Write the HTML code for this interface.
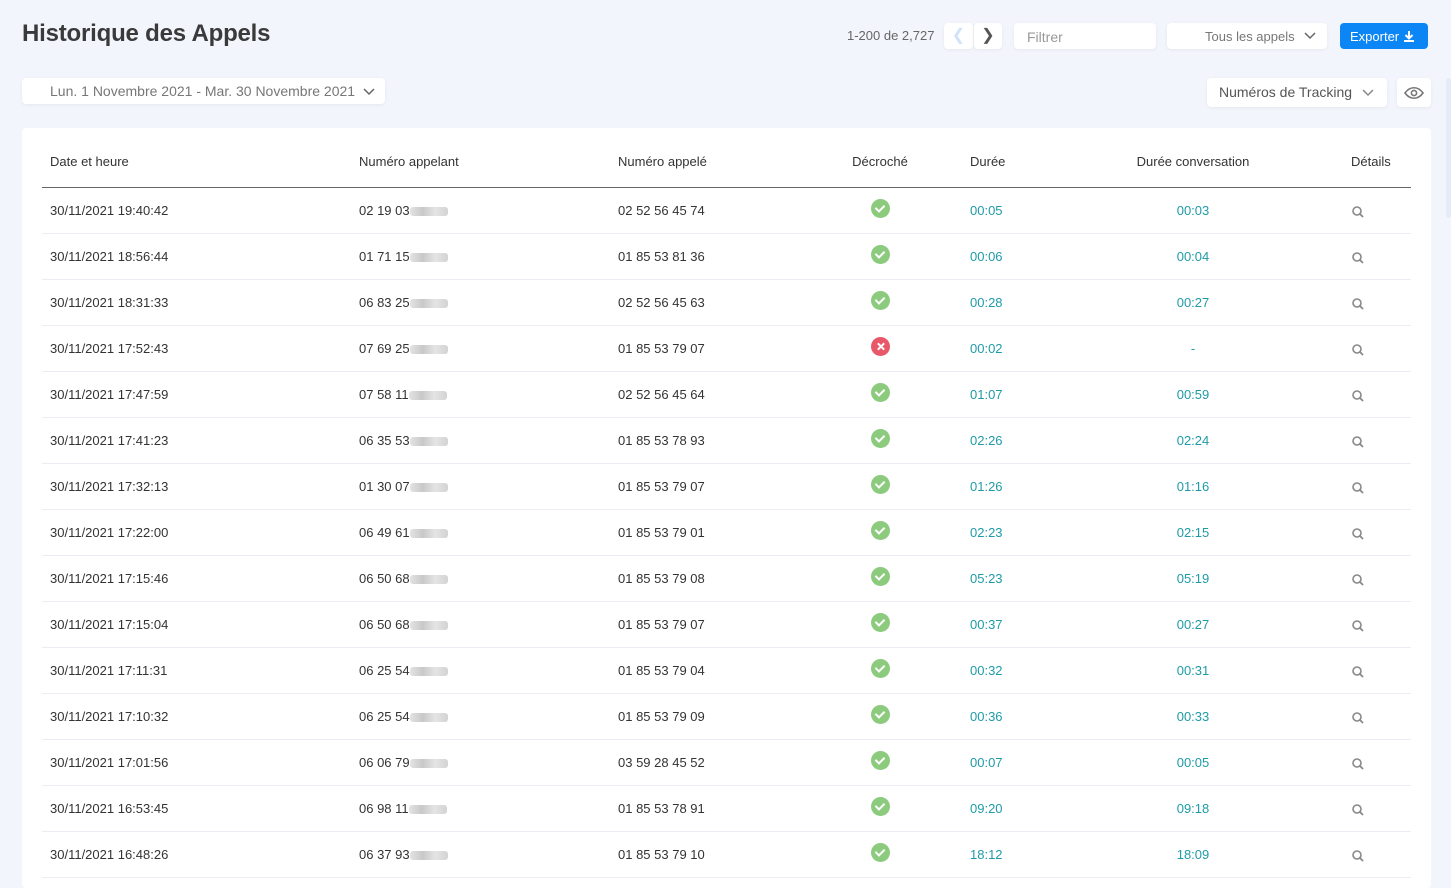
<!DOCTYPE html>
<html><head><meta charset="utf-8"><style>
*{box-sizing:border-box;margin:0;padding:0}
body{width:1451px;height:877px;overflow:hidden;background:#f3f5fc;font-family:"Liberation Sans",sans-serif;position:relative;color:#333}
.t{position:absolute;left:22px;top:20px;font-size:24px;font-weight:bold;color:#3a3a3a;letter-spacing:-0.2px}
.box{position:absolute;background:#fff;border-radius:4px;box-shadow:0 1px 3px rgba(0,0,0,.06)}
.card{position:absolute;left:22px;top:128px;width:1409px;height:760px;background:#fff;border-radius:4px}
table{position:absolute;left:20px;top:0;width:1369px;border-collapse:collapse;font-size:13px;table-layout:fixed}
th{height:59px;text-align:left;font-weight:normal;color:#333;border-bottom:1px solid #666;padding-top:8px}
td{height:46px;border-bottom:1px solid #ececf4;color:#333}
.g{color:#1f9ba8}
.ok,.ko{display:inline-block;width:19px;height:19px;border-radius:50%;background:#8ccb7e;position:relative;top:0px}
.ko{background:#e85868}
.ok:after{content:"";position:absolute;left:6px;top:4px;width:4px;height:7px;border:solid #fff;border-width:0 2px 2px 0;transform:rotate(45deg)}
.ko:before,.ko:after{content:"";position:absolute;left:9px;top:5px;width:2px;height:9px;background:#fff;transform:rotate(45deg)}
.ko:after{transform:rotate(-45deg)}
.bl{display:inline-block;width:38px;height:9px;background:linear-gradient(90deg,#ddd,#bbb,#ddd,#c8c8c8);border-radius:3px;opacity:.8;vertical-align:-1px}
.c1{padding-left:8px;width:317px}.c2{width:259px}.c3{width:217px}.c4{width:90px;text-align:center}.c5{width:120px;padding-left:45px}.c6{width:296px;text-align:center}.c7{padding-left:10px;width:70px}
td.c7 svg{position:relative;top:3px;margin-left:0}
</style></head><body>
<div class="t">Historique des Appels</div>
<div style="position:absolute;left:847px;top:28px;font-size:13px;color:#666">1-200 de 2,727</div>
<div class="box" style="left:944px;top:23px;width:29px;height:26px;color:#cfe3fb;font-size:16px;text-align:center;line-height:26px">&#10094;</div>
<div class="box" style="left:974px;top:23px;width:28px;height:26px;color:#555;font-size:16px;text-align:center;line-height:26px">&#10095;</div>
<div class="box" style="left:1014px;top:23px;width:142px;height:26px;font-size:14px;color:#999;padding:6px 13px">Filtrer</div>
<div class="box" style="left:1167px;top:23px;width:160px;height:26px;font-size:13px;color:#777;padding:6px 0 0 38px">Tous les appels <svg width="12" height="8" viewBox="0 0 12 8" style="position:absolute;right:11px;top:9px"><path d="M1 1l5 5 5-5" stroke="#666" stroke-width="1.5" fill="none"/></svg></div>
<div style="position:absolute;left:1340px;top:23px;width:88px;height:26px;background:#0c86f5;border-radius:4px;color:#fff;font-size:13px;padding:6px 0 0 10px">Exporter <svg width="12" height="12" viewBox="0 0 12 12" style="vertical-align:-1px"><path d="M6 1v7M2.5 5L6 8.5 9.5 5M1 11h10" stroke="#fff" stroke-width="2" fill="none"/></svg></div>
<div class="box" style="left:22px;top:78px;width:363px;height:26px;font-size:14px;color:#777;padding:5px 0 0 28px">Lun. 1 Novembre 2021 - Mar. 30 Novembre 2021 <svg width="12" height="8" viewBox="0 0 12 8" style="margin-left:4px"><path d="M1 1l5 5 5-5" stroke="#666" stroke-width="1.5" fill="none"/></svg></div>
<div class="box" style="left:1207px;top:78px;width:180px;height:29px;font-size:14px;color:#555;padding:6px 0 0 12px">Numéros de Tracking <svg width="12" height="8" viewBox="0 0 12 8" style="margin-left:6px"><path d="M1 1l5 5 5-5" stroke="#888" stroke-width="1.5" fill="none"/></svg></div>
<div class="box" style="left:1397px;top:78px;width:34px;height:29px"><svg width="34" height="29" viewBox="0 0 34 29"><path d="M8 15c5-7 13-7 18 0-5 7-13 7-18 0z" stroke="#777" stroke-width="1.6" fill="none"/><circle cx="17" cy="15" r="2.6" stroke="#777" stroke-width="1.6" fill="none"/></svg></div>
<div style="position:absolute;left:1446px;top:78px;width:5px;height:140px;background:#e4ecf8;border-radius:3px"></div>
<div class="card"><table>
<tr><th class="c1">Date et heure</th><th class="c2">Numéro appelant</th><th class="c3">Numéro appelé</th><th class="c4">Décroché</th><th class="c5">Durée</th><th class="c6">Durée conversation</th><th class="c7">Détails</th></tr>
<tr><td class="c1">30/11/2021 19:40:42</td><td>02 19 03<span class="bl"></span></td><td>02 52 56 45 74</td><td class="c4"><i class="ok"></i></td><td class="c5 g">00:05</td><td class="c6 g">00:03</td><td class="c7"><svg width="14" height="14" viewBox="0 0 14 14"><circle cx="6" cy="6" r="4" stroke="#888" stroke-width="1.6" fill="none"/><path d="M9 9l3 3" stroke="#888" stroke-width="1.8"/></svg></td></tr>
<tr><td class="c1">30/11/2021 18:56:44</td><td>01 71 15<span class="bl"></span></td><td>01 85 53 81 36</td><td class="c4"><i class="ok"></i></td><td class="c5 g">00:06</td><td class="c6 g">00:04</td><td class="c7"><svg width="14" height="14" viewBox="0 0 14 14"><circle cx="6" cy="6" r="4" stroke="#888" stroke-width="1.6" fill="none"/><path d="M9 9l3 3" stroke="#888" stroke-width="1.8"/></svg></td></tr>
<tr><td class="c1">30/11/2021 18:31:33</td><td>06 83 25<span class="bl"></span></td><td>02 52 56 45 63</td><td class="c4"><i class="ok"></i></td><td class="c5 g">00:28</td><td class="c6 g">00:27</td><td class="c7"><svg width="14" height="14" viewBox="0 0 14 14"><circle cx="6" cy="6" r="4" stroke="#888" stroke-width="1.6" fill="none"/><path d="M9 9l3 3" stroke="#888" stroke-width="1.8"/></svg></td></tr>
<tr><td class="c1">30/11/2021 17:52:43</td><td>07 69 25<span class="bl"></span></td><td>01 85 53 79 07</td><td class="c4"><i class="ko"></i></td><td class="c5 g">00:02</td><td class="c6 g">-</td><td class="c7"><svg width="14" height="14" viewBox="0 0 14 14"><circle cx="6" cy="6" r="4" stroke="#888" stroke-width="1.6" fill="none"/><path d="M9 9l3 3" stroke="#888" stroke-width="1.8"/></svg></td></tr>
<tr><td class="c1">30/11/2021 17:47:59</td><td>07 58 11<span class="bl"></span></td><td>02 52 56 45 64</td><td class="c4"><i class="ok"></i></td><td class="c5 g">01:07</td><td class="c6 g">00:59</td><td class="c7"><svg width="14" height="14" viewBox="0 0 14 14"><circle cx="6" cy="6" r="4" stroke="#888" stroke-width="1.6" fill="none"/><path d="M9 9l3 3" stroke="#888" stroke-width="1.8"/></svg></td></tr>
<tr><td class="c1">30/11/2021 17:41:23</td><td>06 35 53<span class="bl"></span></td><td>01 85 53 78 93</td><td class="c4"><i class="ok"></i></td><td class="c5 g">02:26</td><td class="c6 g">02:24</td><td class="c7"><svg width="14" height="14" viewBox="0 0 14 14"><circle cx="6" cy="6" r="4" stroke="#888" stroke-width="1.6" fill="none"/><path d="M9 9l3 3" stroke="#888" stroke-width="1.8"/></svg></td></tr>
<tr><td class="c1">30/11/2021 17:32:13</td><td>01 30 07<span class="bl"></span></td><td>01 85 53 79 07</td><td class="c4"><i class="ok"></i></td><td class="c5 g">01:26</td><td class="c6 g">01:16</td><td class="c7"><svg width="14" height="14" viewBox="0 0 14 14"><circle cx="6" cy="6" r="4" stroke="#888" stroke-width="1.6" fill="none"/><path d="M9 9l3 3" stroke="#888" stroke-width="1.8"/></svg></td></tr>
<tr><td class="c1">30/11/2021 17:22:00</td><td>06 49 61<span class="bl"></span></td><td>01 85 53 79 01</td><td class="c4"><i class="ok"></i></td><td class="c5 g">02:23</td><td class="c6 g">02:15</td><td class="c7"><svg width="14" height="14" viewBox="0 0 14 14"><circle cx="6" cy="6" r="4" stroke="#888" stroke-width="1.6" fill="none"/><path d="M9 9l3 3" stroke="#888" stroke-width="1.8"/></svg></td></tr>
<tr><td class="c1">30/11/2021 17:15:46</td><td>06 50 68<span class="bl"></span></td><td>01 85 53 79 08</td><td class="c4"><i class="ok"></i></td><td class="c5 g">05:23</td><td class="c6 g">05:19</td><td class="c7"><svg width="14" height="14" viewBox="0 0 14 14"><circle cx="6" cy="6" r="4" stroke="#888" stroke-width="1.6" fill="none"/><path d="M9 9l3 3" stroke="#888" stroke-width="1.8"/></svg></td></tr>
<tr><td class="c1">30/11/2021 17:15:04</td><td>06 50 68<span class="bl"></span></td><td>01 85 53 79 07</td><td class="c4"><i class="ok"></i></td><td class="c5 g">00:37</td><td class="c6 g">00:27</td><td class="c7"><svg width="14" height="14" viewBox="0 0 14 14"><circle cx="6" cy="6" r="4" stroke="#888" stroke-width="1.6" fill="none"/><path d="M9 9l3 3" stroke="#888" stroke-width="1.8"/></svg></td></tr>
<tr><td class="c1">30/11/2021 17:11:31</td><td>06 25 54<span class="bl"></span></td><td>01 85 53 79 04</td><td class="c4"><i class="ok"></i></td><td class="c5 g">00:32</td><td class="c6 g">00:31</td><td class="c7"><svg width="14" height="14" viewBox="0 0 14 14"><circle cx="6" cy="6" r="4" stroke="#888" stroke-width="1.6" fill="none"/><path d="M9 9l3 3" stroke="#888" stroke-width="1.8"/></svg></td></tr>
<tr><td class="c1">30/11/2021 17:10:32</td><td>06 25 54<span class="bl"></span></td><td>01 85 53 79 09</td><td class="c4"><i class="ok"></i></td><td class="c5 g">00:36</td><td class="c6 g">00:33</td><td class="c7"><svg width="14" height="14" viewBox="0 0 14 14"><circle cx="6" cy="6" r="4" stroke="#888" stroke-width="1.6" fill="none"/><path d="M9 9l3 3" stroke="#888" stroke-width="1.8"/></svg></td></tr>
<tr><td class="c1">30/11/2021 17:01:56</td><td>06 06 79<span class="bl"></span></td><td>03 59 28 45 52</td><td class="c4"><i class="ok"></i></td><td class="c5 g">00:07</td><td class="c6 g">00:05</td><td class="c7"><svg width="14" height="14" viewBox="0 0 14 14"><circle cx="6" cy="6" r="4" stroke="#888" stroke-width="1.6" fill="none"/><path d="M9 9l3 3" stroke="#888" stroke-width="1.8"/></svg></td></tr>
<tr><td class="c1">30/11/2021 16:53:45</td><td>06 98 11<span class="bl"></span></td><td>01 85 53 78 91</td><td class="c4"><i class="ok"></i></td><td class="c5 g">09:20</td><td class="c6 g">09:18</td><td class="c7"><svg width="14" height="14" viewBox="0 0 14 14"><circle cx="6" cy="6" r="4" stroke="#888" stroke-width="1.6" fill="none"/><path d="M9 9l3 3" stroke="#888" stroke-width="1.8"/></svg></td></tr>
<tr><td class="c1">30/11/2021 16:48:26</td><td>06 37 93<span class="bl"></span></td><td>01 85 53 79 10</td><td class="c4"><i class="ok"></i></td><td class="c5 g">18:12</td><td class="c6 g">18:09</td><td class="c7"><svg width="14" height="14" viewBox="0 0 14 14"><circle cx="6" cy="6" r="4" stroke="#888" stroke-width="1.6" fill="none"/><path d="M9 9l3 3" stroke="#888" stroke-width="1.8"/></svg></td></tr>
</table></div>
</body></html>
